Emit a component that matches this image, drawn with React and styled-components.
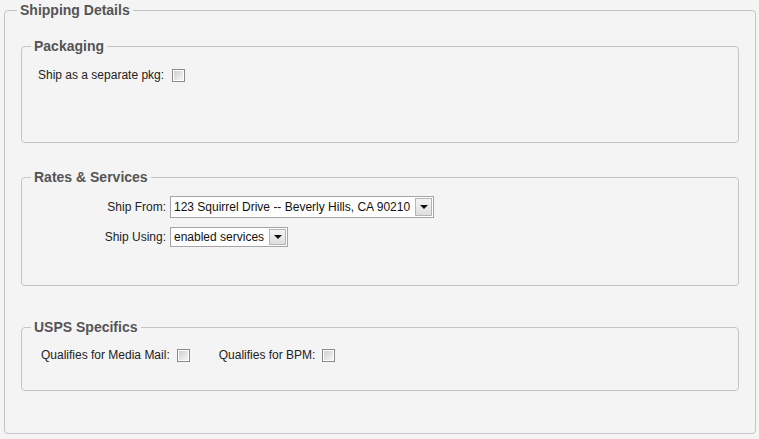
import React from 'react'
import styled, { createGlobalStyle } from 'styled-components'

const Global = createGlobalStyle`
  html, body {
    margin: 0;
    background: #f4f4f4;
  }
  body {
    font-family: "Liberation Sans", Arial, sans-serif;
    font-size: 12px;
    color: #222;
  }
`

const Page = styled.div`
  padding: 2px 3px 0 4px;
`

const Outer = styled.fieldset`
  margin: 0;
  padding: 0 16px 42px 12px;
  border: 1px solid #c4c4c4;
  border-radius: 4px;
  min-width: 0;
`

const OuterLegend = styled.legend`
  padding: 0 3px;
  font-weight: bold;
  font-size: 14px;
  line-height: 16px;
  color: #555;
`

const Section = styled.fieldset`
  margin: ${p => p.$top}px 0 0 4px;
  padding: ${p => p.$pt}px 16px ${p => p.$pb}px 16px;
  border: 1px solid #c4c4c4;
  border-radius: 4px;
  min-width: 0;
`

const SectionLegend = styled.legend`
  margin-left: -7px;
  padding: 0 3px;
  font-weight: bold;
  font-size: 14px;
  line-height: 16px;
  color: #555;
`

const Row = styled.div`
  display: flex;
  align-items: center;
  gap: ${p => p.$gap || 8}px;
  height: ${p => p.$h || 18}px;
  margin-top: ${p => p.$mt || 0}px;
  padding-left: ${p => p.$indent || 0}px;
`

const Label = styled.span`
  white-space: nowrap;
  width: ${p => (p.$w ? `${p.$w}px` : 'auto')};
  text-align: right;
`

const Pair = styled.div`
  display: flex;
  align-items: center;
  gap: 7px;
  margin-right: 21px;
`

const Check = styled.span`
  box-sizing: border-box;
  width: 13px;
  height: 13px;
  border: 1px solid #8a8a8a;
  background: #fff;
  padding: 1px;
  &::after {
    content: '';
    display: block;
    width: 100%;
    height: 100%;
    background: linear-gradient(135deg, #cfcfcf, #f6f6f6);
  }
`

const Select = styled.div`
  box-sizing: border-box;
  display: flex;
  align-items: stretch;
  height: ${p => p.$h}px;
  border: 1px solid #a5a5a5;
  background: #fff;
`

const SelectText = styled.span`
  display: flex;
  align-items: center;
  padding: 0 4px 0 3px;
  white-space: nowrap;
  color: #111;
`

const Arrow = styled.span`
  box-sizing: border-box;
  width: 17px;
  margin: 1px;
  border: 1px solid #b5b5b5;
  background: linear-gradient(#f4f4f4, #dedede);
  display: flex;
  align-items: center;
  justify-content: center;
  &::after {
    content: '';
    border-left: 4px solid transparent;
    border-right: 4px solid transparent;
    border-top: 4px solid #111;
  }
`

export default function App() {
  return (
    <Page>
      <Global />
      <Outer>
        <OuterLegend>Shipping Details</OuterLegend>

        <Section $top={20} $pt={12} $pb={58}>
          <SectionLegend>Packaging</SectionLegend>
          <Row>
            <Label>Ship as a separate pkg:</Label>
            <Check />
          </Row>
        </Section>

        <Section $top={26} $pt={11} $pb={38}>
          <SectionLegend>Rates &amp; Services</SectionLegend>
          <Row $h={22} $gap={4}>
            <Label $w={128}>Ship From:</Label>
            <Select $h={22}>
              <SelectText>123 Squirrel Drive -- Beverly Hills, CA 90210</SelectText>
              <Arrow />
            </Select>
          </Row>
          <Row $h={20} $mt={9} $gap={4}>
            <Label $w={128}>Ship Using:</Label>
            <Select $h={20}>
              <SelectText>enabled services</SelectText>
              <Arrow />
            </Select>
          </Row>
        </Section>

        <Section $top={33} $pt={11} $pb={26}>
          <SectionLegend>USPS Specifics</SectionLegend>
          <Row $indent={3} $gap={0}>
            <Pair>
              <Label>Qualifies for Media Mail:</Label>
              <Check />
            </Pair>
            <Pair>
              <Label>Qualifies for BPM:</Label>
              <Check />
            </Pair>
          </Row>
        </Section>
      </Outer>
    </Page>
  )
}
